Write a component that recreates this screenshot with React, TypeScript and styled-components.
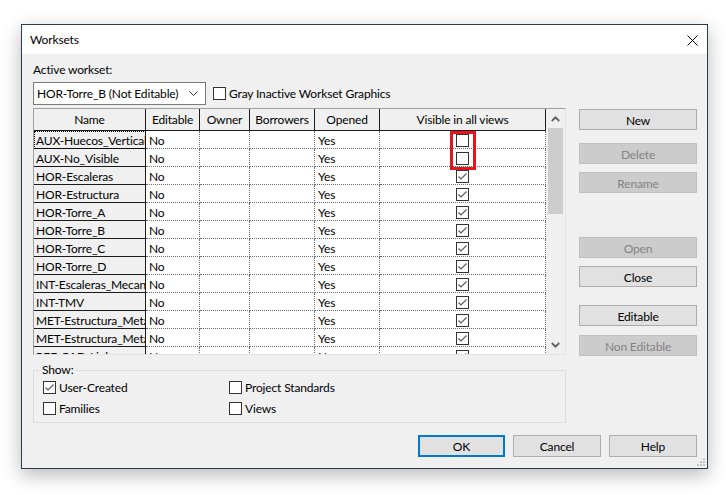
import styled, { createGlobalStyle } from "styled-components";

const GlobalStyle = createGlobalStyle`
  html, body {
    margin: 0;
    padding: 0;
    background: #fff;
  }
  body {
    font-family: Lato, "Noto Sans", "Liberation Sans", sans-serif;
    font-size: 12px;
    letter-spacing: -0.15px;
    color: #000;
  }
  * { box-sizing: border-box; }
`;

type Workset = { name: string; editable: string; opened: string; visible: boolean };

const worksets: Workset[] = [
  { name: "AUX-Huecos_Verticales", editable: "No", opened: "Yes", visible: false },
  { name: "AUX-No_Visible", editable: "No", opened: "Yes", visible: false },
  { name: "HOR-Escaleras", editable: "No", opened: "Yes", visible: true },
  { name: "HOR-Estructura", editable: "No", opened: "Yes", visible: true },
  { name: "HOR-Torre_A", editable: "No", opened: "Yes", visible: true },
  { name: "HOR-Torre_B", editable: "No", opened: "Yes", visible: true },
  { name: "HOR-Torre_C", editable: "No", opened: "Yes", visible: true },
  { name: "HOR-Torre_D", editable: "No", opened: "Yes", visible: true },
  { name: "INT-Escaleras_Mecanicas", editable: "No", opened: "Yes", visible: true },
  { name: "INT-TMV", editable: "No", opened: "Yes", visible: true },
  { name: "MET-Estructura_Metalica", editable: "No", opened: "Yes", visible: true },
  { name: "MET-Estructura_Metalica_2", editable: "No", opened: "Yes", visible: true },
  { name: "REF-CAD-Links", editable: "No", opened: "No", visible: true },
];

const columns = ["Name", "Editable", "Owner", "Borrowers", "Opened", "Visible in all views"];
const colTemplate = "112px 54px 50px 65px 65px 166px";

const CheckBox = ({ checked }: { checked?: boolean }) => (
  <Box>
    {checked && (
      <svg width="11" height="11" viewBox="0 0 11 11">
        <path d="M1.5 5.5 L4 8 L9.5 2.5" fill="none" stroke="#5a5a5a" strokeWidth="1.2" />
      </svg>
    )}
  </Box>
);

const App = () => {
  return (
    <>
      <GlobalStyle />
      <Page>
        <Window>
          <TitleBar>
            <Title>Worksets</Title>
            <svg width="11" height="11" viewBox="0 0 11 11">
              <path d="M0.5 0.5 L10.5 10.5 M10.5 0.5 L0.5 10.5" stroke="#000" strokeWidth="1" />
            </svg>
          </TitleBar>
          <Body>
            <Main>
              <LeftCol>
                <Label>Active workset:</Label>
                <DropRow>
                  <Select>
                    <span>HOR-Torre_B (Not Editable)</span>
                    <svg width="9" height="5" viewBox="0 0 9 5">
                      <path d="M0.5 0.5 L4.5 4.5 L8.5 0.5" fill="none" stroke="#333" strokeWidth="1" />
                    </svg>
                  </Select>
                  <CheckLabel>
                    <CheckBox />
                    Gray Inactive Workset Graphics
                  </CheckLabel>
                </DropRow>
                <Grid>
                  <TableArea>
                    <HeaderRow>
                      {columns.map((c) => (
                        <HeadCell key={c}>{c}</HeadCell>
                      ))}
                    </HeaderRow>
                    {worksets.map((w, i) => (
                      <Row key={w.name}>
                        <NameCell $focused={i === 0}>{w.name}</NameCell>
                        <Cell>{w.editable}</Cell>
                        <Cell />
                        <Cell />
                        <Cell>{w.opened}</Cell>
                        <Cell $center>
                          <CheckBox checked={w.visible} />
                        </Cell>
                      </Row>
                    ))}
                  </TableArea>
                  <ScrollBar>
                    <ArrowBtn $h={19}>
                      <svg width="9" height="6" viewBox="0 0 9 6">
                        <path d="M0.8 5 L4.5 1.3 L8.2 5" fill="none" stroke="#606060" strokeWidth="1.8" />
                      </svg>
                    </ArrowBtn>
                    <Thumb />
                    <Track />
                    <ArrowBtn $h={18}>
                      <svg width="9" height="6" viewBox="0 0 9 6">
                        <path d="M0.8 1 L4.5 4.7 L8.2 1" fill="none" stroke="#606060" strokeWidth="1.8" />
                      </svg>
                    </ArrowBtn>
                  </ScrollBar>
                  <Highlight />
                </Grid>
              </LeftCol>
              <RightCol>
                <Btn>New</Btn>
                <Btn $gap={13} disabled>Delete</Btn>
                <Btn $gap={8} disabled>Rename</Btn>
                <Btn $gap={44} disabled>Open</Btn>
                <Btn $gap={8}>Close</Btn>
                <Btn $gap={18}>Editable</Btn>
                <Btn $gap={9} disabled>Non Editable</Btn>
              </RightCol>
            </Main>
            <ShowGroup>
              <Legend>Show:</Legend>
              <ShowGrid>
                <CheckLabel>
                  <CheckBox checked />
                  User-Created
                </CheckLabel>
                <CheckLabel>
                  <CheckBox />
                  Project Standards
                </CheckLabel>
                <CheckLabel>
                  <CheckBox />
                  Families
                </CheckLabel>
                <CheckLabel>
                  <CheckBox />
                  Views
                </CheckLabel>
              </ShowGrid>
            </ShowGroup>
            <Footer>
              <DialogBtn $w={87} $primary>OK</DialogBtn>
              <DialogBtn $w={88}>Cancel</DialogBtn>
              <DialogBtn $w={88}>Help</DialogBtn>
            </Footer>
          </Body>
          <Grip>
            <svg width="8" height="8" viewBox="0 0 8 8">
              <rect x="6" y="0" width="2" height="2" fill="#c4c4c4" />
              <rect x="3" y="3" width="2" height="2" fill="#c4c4c4" />
              <rect x="6" y="3" width="2" height="2" fill="#c4c4c4" />
              <rect x="0" y="6" width="2" height="2" fill="#c4c4c4" />
              <rect x="3" y="6" width="2" height="2" fill="#c4c4c4" />
              <rect x="6" y="6" width="2" height="2" fill="#c4c4c4" />
            </svg>
          </Grip>
        </Window>
      </Page>
    </>
  );
};

export default App;

const Page = styled.div`
  width: 726px;
  height: 495px;
  padding: 24px 0 0 21px;
  overflow: hidden;
`;

const Window = styled.div`
  position: relative;
  width: 687px;
  height: 445px;
  border: 1px solid #2a3b4b;
  display: flex;
  flex-direction: column;
  box-shadow: 0 6px 18px rgba(0, 0, 0, 0.28);
`;

const TitleBar = styled.div`
  height: 30px;
  background: #fff;
  display: flex;
  align-items: center;
  justify-content: space-between;
  padding: 1px 9px 0 8px;
`;

const Title = styled.div`
  font-size: 12px;
  line-height: 16px;
`;

const Body = styled.div`
  flex: 1;
  background: #f0f0f0;
  padding: 8px 10px 11px 11px;
  display: flex;
  flex-direction: column;
`;

const Main = styled.div`
  display: flex;
  gap: 13px;
`;

const LeftCol = styled.div`
  width: 533px;
  display: flex;
  flex-direction: column;
`;

const RightCol = styled.div`
  width: 118px;
  padding-top: 47px;
  display: flex;
  flex-direction: column;
`;

const Label = styled.div`
  height: 15px;
  line-height: 16px;
`;

const DropRow = styled.div`
  margin-top: 5px;
  display: flex;
  align-items: center;
  gap: 7px;
`;

const Select = styled.div`
  width: 173px;
  height: 23px;
  background: #fff;
  border: 1px solid #7a7a7a;
  display: flex;
  align-items: center;
  justify-content: space-between;
  padding: 0 7px 0 3px;
  line-height: 16px;
`;

const CheckLabel = styled.div`
  display: flex;
  align-items: center;
  gap: 3px;
  height: 13px;
  line-height: 16px;
  white-space: nowrap;
`;

const Box = styled.div`
  width: 13px;
  height: 13px;
  flex: none;
  border: 1px solid #333;
  background: #fff;
  display: flex;
  align-items: center;
  justify-content: center;
`;

const Grid = styled.div`
  position: relative;
  margin-top: 3px;
  width: 533px;
  height: 247px;
  border: 1px solid;
  border-color: #a0a0a0 #e3e3e3 #e3e3e3 #a0a0a0;
  display: flex;
  background: #fff;
`;

const TableArea = styled.div`
  width: 512px;
  height: 100%;
  overflow: hidden;
`;

const HeaderRow = styled.div`
  display: grid;
  grid-template-columns: ${colTemplate};
  height: 22px;
`;

const HeadCell = styled.div`
  background: #f0f0f0;
  border-right: 1px solid #1a1a1a;
  border-bottom: 1px solid #1a1a1a;
  padding-top: 2px;
  text-align: center;
  line-height: 18px;
  white-space: nowrap;
  overflow: hidden;
`;

const Row = styled.div`
  display: grid;
  grid-template-columns: ${colTemplate};
  height: 18px;
`;

const NameCell = styled.div<{ $focused?: boolean }>`
  background: #f0f0f0;
  border-right: 1px solid #1a1a1a;
  border-bottom: 1px solid #1a1a1a;
  padding: 1px 0 0 2px;
  line-height: 18px;
  white-space: nowrap;
  overflow: hidden;
  outline: ${(p) => (p.$focused ? "1px dotted #000" : "none")};
  outline-offset: -1px;
`;

const Cell = styled.div<{ $center?: boolean }>`
  border-right: 1px dotted #6e6e6e;
  border-bottom: 1px dotted #6e6e6e;
  padding: ${(p) => (p.$center ? "1px 0 0 0" : "1px 0 0 3px")};
  line-height: 18px;
  white-space: nowrap;
  overflow: hidden;
  display: ${(p) => (p.$center ? "flex" : "block")};
  align-items: center;
  justify-content: center;
`;

const ScrollBar = styled.div`
  width: 19px;
  background: #f0f0f0;
  display: flex;
  flex-direction: column;
`;

const ArrowBtn = styled.div<{ $h: number }>`
  height: ${(p) => p.$h}px;
  display: flex;
  align-items: center;
  justify-content: center;
`;

const Thumb = styled.div`
  height: 86px;
  margin: 0 2px;
  background: #cdcdcd;
`;

const Track = styled.div`
  flex: 1;
`;

const Highlight = styled.div`
  position: absolute;
  left: 416px;
  top: 22px;
  width: 26px;
  height: 39px;
  border: 3px solid #e8141c;
`;

const Btn = styled.button<{ $gap?: number }>`
  width: 118px;
  height: 21px;
  margin-top: ${(p) => p.$gap ?? 0}px;
  border: 1px solid #adadad;
  background: #e1e1e1;
  color: #000;
  font-family: inherit;
  font-size: 12px;
  letter-spacing: inherit;
  line-height: 16px;
  padding: 2px 0 0 0;

  &:disabled {
    background: #cccccc;
    border-color: #bfbfbf;
    color: #838383;
  }
`;

const ShowGroup = styled.fieldset`
  margin: 6px 0 0 0;
  width: 533px;
  height: 61px;
  border: 1px solid #dcdcdc;
  padding: 3px 0 6px 9px;
`;

const Legend = styled.legend`
  padding: 0 1px;
  margin-left: -2px;
  line-height: 16px;
`;

const ShowGrid = styled.div`
  display: grid;
  grid-template-columns: 186px 1fr;
  row-gap: 8px;
`;

const Footer = styled.div`
  margin-top: 12px;
  display: flex;
  justify-content: flex-end;
  gap: 8px;
`;

const DialogBtn = styled.button<{ $w: number; $primary?: boolean }>`
  width: ${(p) => p.$w}px;
  height: 22px;
  border: ${(p) => (p.$primary ? "2px solid #0078d7" : "1px solid #adadad")};
  background: #e1e1e1;
  color: #000;
  font-family: inherit;
  font-size: 12px;
  letter-spacing: inherit;
  line-height: 16px;
  padding: 1px 0 0 0;
`;

const Grip = styled.div`
  position: absolute;
  right: 2px;
  bottom: 2px;
  width: 8px;
  height: 8px;
  display: flex;
`;
